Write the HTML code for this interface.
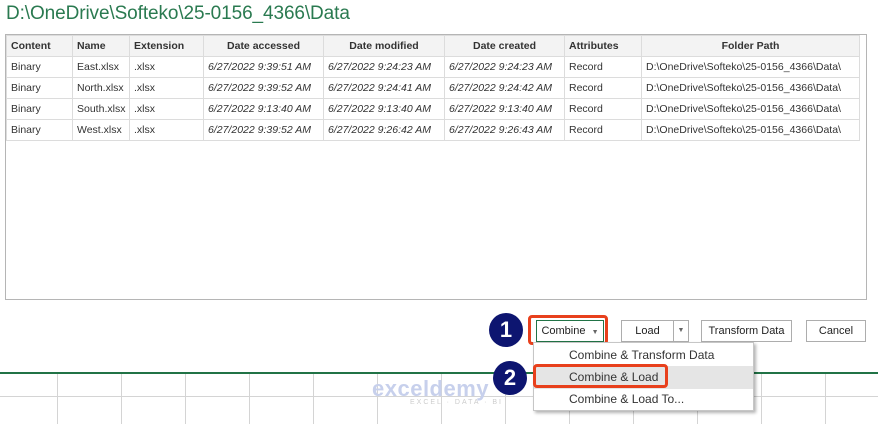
<!DOCTYPE html>
<html><head><meta charset="utf-8"><style>
*{margin:0;padding:0;box-sizing:border-box}
body{width:878px;height:422px;background:#fff;position:relative;overflow:hidden;font-family:"Liberation Sans",sans-serif;font-size:11px;color:#333}
.title{position:absolute;left:6px;top:3px;font-size:19px;color:#2a7a50;letter-spacing:-0.1px}
.box{position:absolute;left:5px;top:34px;width:862px;height:266px;border:1px solid #b5b5b5}
table{position:absolute;left:0;top:0;border-collapse:collapse;table-layout:fixed;width:853px}
td,th{border:1px solid #dcdcdc;height:21px;padding:0 4px;white-space:nowrap;overflow:hidden;font-size:10.5px;text-align:left}
th{background:#f3f3f3;font-weight:bold;color:#333}
th.c{text-align:center}
td.i{font-style:italic}
.btn{position:absolute;top:320px;height:22px;border:1px solid #adadad;background:#fff;font-size:11px;text-align:center;line-height:20px;color:#222}
.grid{position:absolute;left:0;top:372px;width:878px;height:50px;background:#fff;border-top:2px solid #217346}
.v{position:absolute;top:0;width:1px;height:50px;background:#d4d4d4}
.menu{position:absolute;left:533px;top:342px;width:221px;height:69px;background:#fff;border:1px solid #c6c6c6;box-shadow:2px 2px 3px rgba(0,0,0,.3)}
.mi{position:absolute;left:35px;font-size:12px;color:#333}
.circ{position:absolute;width:34px;height:34px;border-radius:50%;background:#0d1570;color:#fff;font-weight:bold;font-size:22px;text-align:center;line-height:34px}
.red{position:absolute;border:3px solid #e8401c;border-radius:4px}
</style></head><body>
<div class="title">D:\OneDrive\Softeko\25-0156_4366\Data</div>
<div class="box">
<table>
<colgroup><col style="width:66px"><col style="width:57px"><col style="width:74px"><col style="width:120px"><col style="width:121px"><col style="width:120px"><col style="width:77px"><col style="width:218px"></colgroup>
<tr><th>Content</th><th>Name</th><th>Extension</th><th class="c">Date accessed</th><th class="c">Date modified</th><th class="c">Date created</th><th>Attributes</th><th class="c">Folder Path</th></tr>
<tr><td>Binary</td><td>East.xlsx</td><td>.xlsx</td><td class="i">6/27/2022 9:39:51 AM</td><td class="i">6/27/2022 9:24:23 AM</td><td class="i">6/27/2022 9:24:23 AM</td><td>Record</td><td>D:\OneDrive\Softeko\25-0156_4366\Data\</td></tr>
<tr><td>Binary</td><td>North.xlsx</td><td>.xlsx</td><td class="i">6/27/2022 9:39:52 AM</td><td class="i">6/27/2022 9:24:41 AM</td><td class="i">6/27/2022 9:24:42 AM</td><td>Record</td><td>D:\OneDrive\Softeko\25-0156_4366\Data\</td></tr>
<tr><td>Binary</td><td>South.xlsx</td><td>.xlsx</td><td class="i">6/27/2022 9:13:40 AM</td><td class="i">6/27/2022 9:13:40 AM</td><td class="i">6/27/2022 9:13:40 AM</td><td>Record</td><td>D:\OneDrive\Softeko\25-0156_4366\Data\</td></tr>
<tr><td>Binary</td><td>West.xlsx</td><td>.xlsx</td><td class="i">6/27/2022 9:39:52 AM</td><td class="i">6/27/2022 9:26:42 AM</td><td class="i">6/27/2022 9:26:43 AM</td><td>Record</td><td>D:\OneDrive\Softeko\25-0156_4366\Data\</td></tr>
</table>
</div>
<div class="grid">
<div class="v" style="left:57px"></div><div class="v" style="left:121px"></div><div class="v" style="left:185px"></div><div class="v" style="left:249px"></div><div class="v" style="left:313px"></div><div class="v" style="left:377px"></div><div class="v" style="left:441px"></div><div class="v" style="left:505px"></div><div class="v" style="left:569px"></div><div class="v" style="left:633px"></div><div class="v" style="left:697px"></div><div class="v" style="left:761px"></div><div class="v" style="left:825px"></div>
<div style="position:absolute;left:0;top:22px;width:878px;height:1px;background:#d4d4d4"></div>
<div style="position:absolute;left:372px;top:2px;font-size:22px;font-weight:bold;color:#c7d0ec;letter-spacing:.5px">exceldemy</div>
<div style="position:absolute;left:410px;top:25px;font-size:7px;color:#ccc;letter-spacing:2px">EXCEL · DATA · BI</div>
</div>
<div class="btn" style="left:536px;width:68px;border-color:#217346">Combine &nbsp;<span style="font-size:7px;color:#666">▼</span></div>
<div class="btn" style="left:621px;width:53px">Load</div>
<div class="btn" style="left:673px;width:16px;font-size:7px;color:#666">▼</div>
<div class="btn" style="left:701px;width:91px">Transform Data</div>
<div class="btn" style="left:806px;width:60px">Cancel</div>
<div class="red" style="left:528px;top:315px;width:80px;height:30px"></div>
<div class="menu">
<div class="mi" style="top:5px">Combine &amp; Transform Data</div>
<div style="position:absolute;left:0;top:23px;width:219px;height:23px;background:#e5e5e5"></div>
<div class="mi" style="top:27px">Combine &amp; Load</div>
<div class="mi" style="top:49px">Combine &amp; Load To...</div>
</div>
<div class="red" style="left:533px;top:364px;width:135px;height:24px"></div>
<div class="circ" style="left:489px;top:313px">1</div>
<div class="circ" style="left:493px;top:361px">2</div>
</body></html>
